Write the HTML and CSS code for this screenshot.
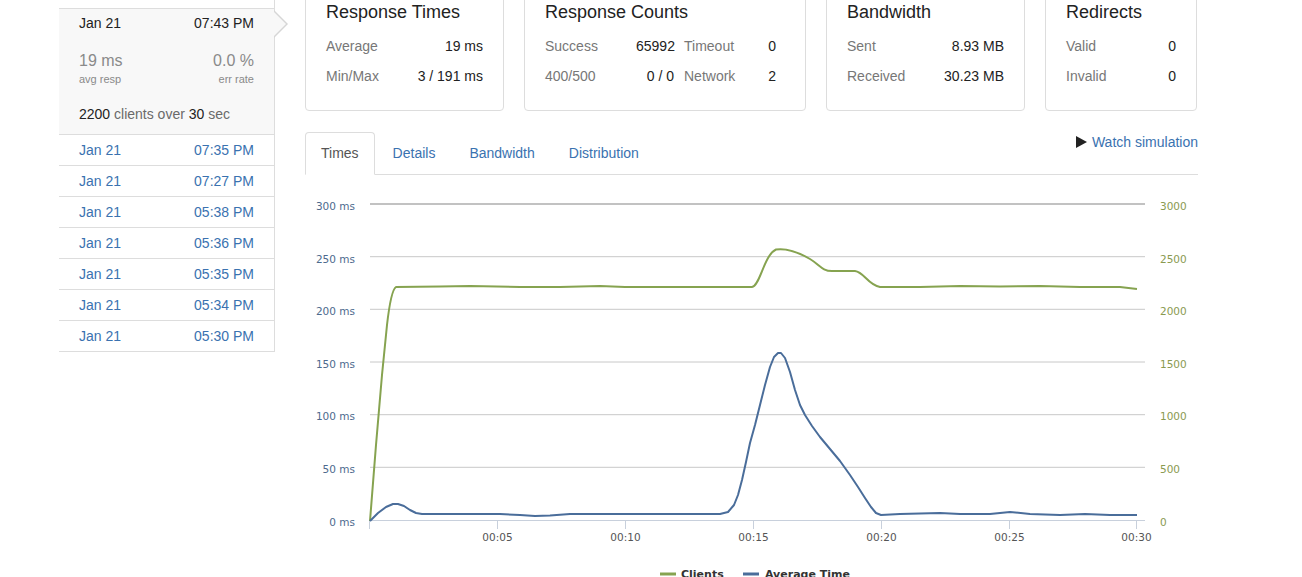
FILE: index.html
```html
<!DOCTYPE html>
<html>
<head>
<meta charset="utf-8">
<link rel="stylesheet" href="styles.css">
</head>
<body>
<div class="page">
  <aside class="sidebar">
    <div class="run current">
      <div class="run-head"><span>Jan 21</span><span>07:43 PM</span></div>
      <div class="run-stats">
        <div class="stat"><div class="stat-val">19 ms</div><div class="stat-lbl">avg resp</div></div>
        <div class="stat right"><div class="stat-val">0.0 %</div><div class="stat-lbl">err rate</div></div>
      </div>
      <div class="run-clients"><b>2200</b> clients over <b>30</b> sec</div>
    </div>
    <a class="run-link"><span>Jan 21</span><span>07:35 PM</span></a>
    <a class="run-link"><span>Jan 21</span><span>07:27 PM</span></a>
    <a class="run-link"><span>Jan 21</span><span>05:38 PM</span></a>
    <a class="run-link"><span>Jan 21</span><span>05:36 PM</span></a>
    <a class="run-link"><span>Jan 21</span><span>05:35 PM</span></a>
    <a class="run-link"><span>Jan 21</span><span>05:34 PM</span></a>
    <a class="run-link"><span>Jan 21</span><span>05:30 PM</span></a>
  </aside>
  <main class="main">
    <div class="cards">
      <div class="card w199">
        <h3>Response Times</h3>
        <div class="row"><span class="lbl">Average</span><span class="val">19 ms</span></div>
        <div class="row"><span class="lbl">Min/Max</span><span class="val">3 / 191 ms</span></div>
      </div>
      <div class="card w282">
        <h3>Response Counts</h3>
        <div class="grid4">
          <span class="lbl">Success</span><span class="val">65992</span><span class="lbl">Timeout</span><span class="val">0</span>
          <span class="lbl">400/500</span><span class="val">0 / 0</span><span class="lbl">Network</span><span class="val">2</span>
        </div>
      </div>
      <div class="card w199">
        <h3>Bandwidth</h3>
        <div class="row"><span class="lbl">Sent</span><span class="val">8.93 MB</span></div>
        <div class="row"><span class="lbl">Received</span><span class="val">30.23 MB</span></div>
      </div>
      <div class="card w152">
        <h3>Redirects</h3>
        <div class="row"><span class="lbl">Valid</span><span class="val">0</span></div>
        <div class="row"><span class="lbl">Invalid</span><span class="val">0</span></div>
      </div>
    </div>
    <div class="tabs">
      <a class="tab active">Times</a>
      <a class="tab">Details</a>
      <a class="tab">Bandwidth</a>
      <a class="tab">Distribution</a>
      <a class="watch"><svg class="play" width="11" height="12" viewBox="0 0 11 12"><path d="M0 0 L11 6 L0 12 Z" fill="#222"/></svg>Watch simulation</a>
    </div>
    <svg class="chart" width="893" height="402" viewBox="0 0 893 402">
      <g transform="translate(-305,-175)">
        <g class="grid">
          <line x1="370" y1="204" x2="1145" y2="204" stroke="#c2c2c2" stroke-width="2"/>
          <line x1="370" y1="256.7" x2="1145" y2="256.7" stroke="#c8c8c8" stroke-width="1"/>
          <line x1="370" y1="309.3" x2="1145" y2="309.3" stroke="#c8c8c8" stroke-width="1"/>
          <line x1="370" y1="362" x2="1145" y2="362" stroke="#c8c8c8" stroke-width="1"/>
          <line x1="370" y1="414.7" x2="1145" y2="414.7" stroke="#c8c8c8" stroke-width="1"/>
          <line x1="370" y1="467.3" x2="1145" y2="467.3" stroke="#c8c8c8" stroke-width="1"/>
          <line x1="370" y1="520.5" x2="1145" y2="520.5" stroke="#c8d0dc" stroke-width="1"/>
        </g>
        <g class="ticks" stroke="#c8d0dc" stroke-width="1">
          <line x1="369.5" y1="520" x2="369.5" y2="529"/>
          <line x1="497.5" y1="520" x2="497.5" y2="529"/>
          <line x1="625.5" y1="520" x2="625.5" y2="529"/>
          <line x1="753.5" y1="520" x2="753.5" y2="529"/>
          <line x1="881.5" y1="520" x2="881.5" y2="529"/>
          <line x1="1009.5" y1="520" x2="1009.5" y2="529"/>
          <line x1="1136.5" y1="520" x2="1136.5" y2="529"/>
        </g>
        <g class="ylab-left" text-anchor="end">
          <text x="355" y="210">300 ms</text>
          <text x="355" y="262.5">250 ms</text>
          <text x="355" y="315">200 ms</text>
          <text x="355" y="367.5">150 ms</text>
          <text x="355" y="420">100 ms</text>
          <text x="355" y="472.5">50 ms</text>
          <text x="355" y="526">0 ms</text>
        </g>
        <g class="ylab-right">
          <text x="1160" y="210">3000</text>
          <text x="1160" y="262.5">2500</text>
          <text x="1160" y="315">2000</text>
          <text x="1160" y="367.5">1500</text>
          <text x="1160" y="420">1000</text>
          <text x="1160" y="472.5">500</text>
          <text x="1160" y="526">0</text>
        </g>
        <g class="xlab" text-anchor="middle">
          <text x="497.5" y="541">00:05</text>
          <text x="625.5" y="541">00:10</text>
          <text x="753.5" y="541">00:15</text>
          <text x="881.5" y="541">00:20</text>
          <text x="1009.5" y="541">00:25</text>
          <text x="1136.5" y="541">00:30</text>
        </g>
        <path class="clients" d="M370,521 L376,445 L382,375 L387,325 Q391,290 396,287 L440,286.5 L470,286 L520,287 L560,287 L600,286 L625,287 L700,287 L752,287 C760,286 764,255 776,249.5 C786,248 798,252 810,259 C820,265 822,271 832,271 L855,271 C864,272 868,285 880,287 L920,287 L960,286 L1000,286.5 L1040,286 L1080,287 L1120,287 L1137,289"/>
        <polyline class="avg" points="370,521 378,513 386,507 393,504 398,504 404,506 410,510 416,513 422,514 500,514 520,515 535,516 550,515.5 570,514 720,514 728,512 734,505 738,495 742,480 746,462 750,443 755,425 760,405 765,385 770,367 774,357 778,353 781,353 785,358 790,372 795,390 800,405 805,415 812,426 820,437 830,449 840,461 850,475 858,487 865,498 871,507 876,513 881,515 900,514 940,513 960,514 990,514 1010,512 1030,514 1060,515 1085,514 1110,515 1137,515"/>
        <g class="legend">
          <line x1="660" y1="574" x2="676" y2="574" stroke="#86a350" stroke-width="3"/>
          <text x="681" y="578">Clients</text>
          <line x1="743" y1="574" x2="759" y2="574" stroke="#4a6d9a" stroke-width="3"/>
          <text x="765" y="578">Average Time</text>
        </g>
      </g>
    </svg>
  </main>
</div>
</body>
</html>
```

FILE: styles.css
```css
* { box-sizing: border-box; }
html, body { margin: 0; padding: 0; background: #fff; }
body {
  font-family: "Liberation Sans", Arial, Helvetica, sans-serif;
  font-size: 14px;
  line-height: 20px;
  color: #333;
  overflow: hidden;
}
.page {
  display: flex;
  align-items: flex-start;
  padding-left: 59px;
  margin-top: -20px;
}
.sidebar {
  width: 216px;
  flex: none;
  border-right: 1px solid #ddd;
  padding-top: 28px;
}
.run.current {
  position: relative;
  background: #f8f8f8;
  border-top: 1px solid #ddd;
  border-bottom: 1px solid #ddd;
  padding: 4px 20px 10px 20px;
}
.run.current::before {
  content: "";
  position: absolute;
  top: 1px;
  left: 100%;
  width: 0; height: 0;
  border-top: 14px solid transparent;
  border-bottom: 14px solid transparent;
  border-left: 14px solid #d6d6d6;
}
.run.current::after {
  content: "";
  position: absolute;
  top: 2px;
  left: 100%;
  margin-left: -1px;
  width: 0; height: 0;
  border-top: 13px solid transparent;
  border-bottom: 13px solid transparent;
  border-left: 13px solid #f8f8f8;
}
.run-head, .run-link, .run-stats, .row {
  display: flex;
  justify-content: space-between;
}
.run-head { color: #222; }
.run-stats { margin-top: 17px; }
.stat.right { text-align: right; }
.stat-val {
  font-size: 16px;
  line-height: 21px;
  color: #8a8a8a;
  font-weight: 300;
}
.stat-lbl {
  font-size: 11px;
  line-height: 14px;
  color: #8a8a8a;
  margin-top: 1px;
}
.run-clients {
  margin-top: 18px;
  color: #6a6a6a;
}
.run-clients b { font-weight: normal; color: #222; }
.run-link {
  height: 31px;
  padding: 5px 20px;
  border-bottom: 1px solid #ddd;
  color: #3a72b0;
  line-height: 20px;
}
.main {
  margin-left: 30px;
  width: 893px;
  flex: none;
}
.cards {
  display: flex;
  gap: 20px;
}
.card {
  border: 1px solid #ddd;
  border-radius: 4px;
  padding: 21px 20px 19px 20px;
}
.w199 { width: 199px; }
.w282 { width: 282px; }
.w152 { width: 152px; }
.card h3 {
  margin: 0 0 9px 0;
  font-size: 18px;
  line-height: 20px;
  font-weight: normal;
  color: #222;
}
.row { padding: 5px 0; }
.lbl { color: #777; }
.val { color: #222; }
.grid4 {
  display: grid;
  grid-template-columns: 91px 38px 80px 22px;
  column-gap: 0;
}
.grid4 > span { padding: 5px 0; }
.grid4 > .val { text-align: right; }
.grid4 > .lbl:nth-child(4n+3) { padding-left: 10px; }
.tabs {
  display: flex;
  align-items: flex-start;
  margin-top: 21px;
  border-bottom: 1px solid #ddd;
  height: 43px;
}
.tab {
  padding: 10px 15px;
  line-height: 20px;
  border: 1px solid transparent;
  border-radius: 4px 4px 0 0;
  margin-right: 2px;
  color: #3a72b0;
  height: 43px;
}
.tab.active {
  color: #555;
  background: #fff;
  border-color: #ddd #ddd transparent;
}
.watch {
  margin-left: auto;
  color: #3a72b0;
  display: flex;
  align-items: center;
  line-height: 20px;
}
.play { margin-right: 5px; }
.chart { display: block; }
.chart text {
  font-family: "DejaVu Sans", Verdana, sans-serif;
  font-size: 10.5px;
}
.ylab-left text { fill: #4d6a8e; }
.ylab-right text { fill: #8a9a50; }
.xlab text { fill: #555; }
.legend text { font-weight: bold; font-size: 11px; fill: #333; }
.clients { fill: none; stroke: #86a350; stroke-width: 2; stroke-linejoin: round; }
.avg { fill: none; stroke: #4a6d9a; stroke-width: 2; stroke-linejoin: round; }
```
